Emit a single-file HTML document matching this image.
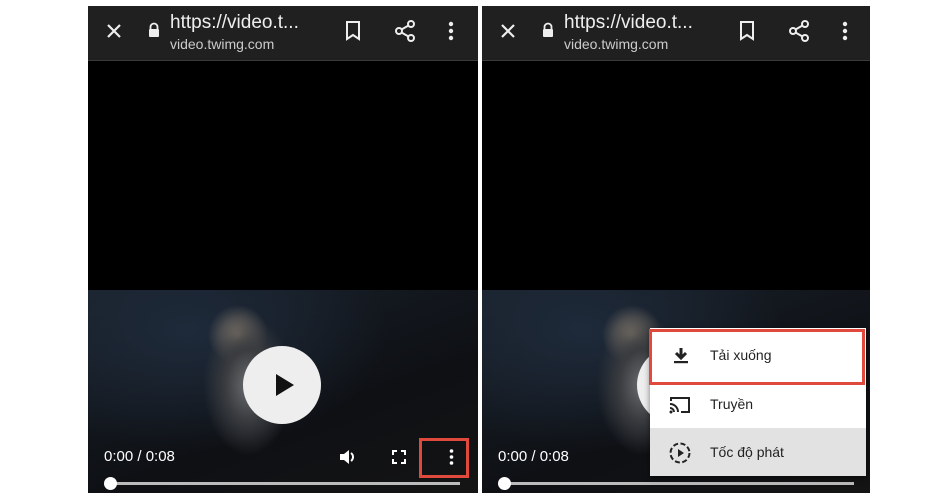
<!DOCTYPE html>
<html><head><meta charset="utf-8"><style>
body{margin:0;width:946px;height:497px;background:#fff;position:relative;overflow:hidden;font-family:"Liberation Sans",sans-serif}
.p{position:absolute;top:6px;width:390px;height:487px;background:#000;overflow:hidden}
.bar{position:absolute;left:0;top:0;width:100%;height:54px;background:#202020;border-bottom:1px solid #3a3a3a}
.url{position:absolute;left:82px;top:6px;color:#eee;font-size:19px}
.sub{position:absolute;left:82px;top:30px;color:#ccc;font-size:14px}
.img{position:absolute;left:0;top:284px;width:100%;height:203px;
background:radial-gradient(ellipse 45px 70px at 160px 95px,#6a6d70 0%,#3a3c40 50%,transparent 100%),
radial-gradient(ellipse 30px 30px at 150px 45px,#8a7e70,transparent),
radial-gradient(ellipse 200px 120px at 100px 40px,#1e2a3a,transparent),
linear-gradient(160deg,#1a222c,#0e1014 60%,#141414)}
.t{position:absolute;left:16px;top:442px;color:#fff;font-size:15px}
.track{position:absolute;left:22px;top:476px;width:350px;height:3px;background:#bbb}
.knob{position:absolute;left:16px;top:471px;width:13px;height:13px;border-radius:50%;background:#fff}
svg{position:absolute}
</style></head><body>
<div class="p" style="left:88px">
<div class="bar">
<svg style="left:16px;top:15px" width="20" height="20" viewBox="0 0 20 20"><path d="M4 4L16 16M16 4L4 16" stroke="#eee" stroke-width="2.2"/></svg>
<svg style="left:59px;top:16px" width="14" height="16" viewBox="0 0 14 16"><path d="M3.5 7V5a3.5 3.5 0 0 1 7 0v2" stroke="#eee" stroke-width="1.8" fill="none"/><rect x="2" y="7" width="10" height="8" rx="1" fill="#eee"/></svg>
<div class="url">https://video.t...</div><div class="sub">video.twimg.com</div>
<svg style="left:256px;top:14px" width="18" height="22" viewBox="0 0 18 22"><path d="M3 2h12v17l-6-4-6 4z" stroke="#eee" stroke-width="2" fill="none"/></svg>
<svg style="left:306px;top:13px" width="22" height="24" viewBox="0 0 22 24"><circle cx="17" cy="5" r="3" stroke="#eee" stroke-width="2" fill="none"/><circle cx="5" cy="12" r="3" stroke="#eee" stroke-width="2" fill="none"/><circle cx="17" cy="19" r="3" stroke="#eee" stroke-width="2" fill="none"/><path d="M7.5 10.5l7-4M7.5 13.5l7 4" stroke="#eee" stroke-width="2"/></svg>
<svg style="left:360px;top:15px" width="6" height="20"><circle cx="3" cy="3" r="2.2" fill="#eee"/><circle cx="3" cy="10" r="2.2" fill="#eee"/><circle cx="3" cy="17" r="2.2" fill="#eee"/></svg>
</div>
<div class="img"></div>
<svg style="left:155px;top:340px" width="78" height="78"><circle cx="39" cy="39" r="39" fill="#eee"/><path d="M33 28v22l18-11z" fill="#111"/></svg>
<div class="t">0:00 / 0:08</div>
<svg style="left:251px;top:443px" width="18" height="16" viewBox="0 0 18 16"><path d="M1 5h4l5-4v14l-5-4H1z" fill="#fff"/><path d="M12 4a5 5 0 0 1 0 8" stroke="#fff" stroke-width="2" fill="none"/></svg>
<svg style="left:304px;top:444px" width="14" height="14" viewBox="0 0 14 14"><path d="M1 5V1h4M9 1h4v4M13 9v4H9M5 13H1V9" stroke="#fff" stroke-width="2" fill="none"/></svg>
<svg style="left:361px;top:443px" width="5" height="16"><circle cx="2.5" cy="2" r="1.8" fill="#fff"/><circle cx="2.5" cy="8" r="1.8" fill="#fff"/><circle cx="2.5" cy="14" r="1.8" fill="#fff"/></svg>
<div style="position:absolute;left:331px;top:432px;width:50px;height:40px;border:3px solid #e04a3c;box-sizing:border-box"></div>
<div class="track"></div><div class="knob"></div>
</div>

<div class="p" style="left:482px;width:388px">
<div class="bar">
<svg style="left:16px;top:15px" width="20" height="20" viewBox="0 0 20 20"><path d="M4 4L16 16M16 4L4 16" stroke="#eee" stroke-width="2.2"/></svg>
<svg style="left:59px;top:16px" width="14" height="16" viewBox="0 0 14 16"><path d="M3.5 7V5a3.5 3.5 0 0 1 7 0v2" stroke="#eee" stroke-width="1.8" fill="none"/><rect x="2" y="7" width="10" height="8" rx="1" fill="#eee"/></svg>
<div class="url">https://video.t...</div><div class="sub">video.twimg.com</div>
<svg style="left:256px;top:14px" width="18" height="22" viewBox="0 0 18 22"><path d="M3 2h12v17l-6-4-6 4z" stroke="#eee" stroke-width="2" fill="none"/></svg>
<svg style="left:306px;top:13px" width="22" height="24" viewBox="0 0 22 24"><circle cx="17" cy="5" r="3" stroke="#eee" stroke-width="2" fill="none"/><circle cx="5" cy="12" r="3" stroke="#eee" stroke-width="2" fill="none"/><circle cx="17" cy="19" r="3" stroke="#eee" stroke-width="2" fill="none"/><path d="M7.5 10.5l7-4M7.5 13.5l7 4" stroke="#eee" stroke-width="2"/></svg>
<svg style="left:360px;top:15px" width="6" height="20"><circle cx="3" cy="3" r="2.2" fill="#eee"/><circle cx="3" cy="10" r="2.2" fill="#eee"/><circle cx="3" cy="17" r="2.2" fill="#eee"/></svg>
</div>
<div class="img"></div>
<svg style="left:155px;top:340px" width="78" height="78"><circle cx="39" cy="39" r="39" fill="#eee"/></svg>
<div class="t">0:00 / 0:08</div>
<div class="track" style="width:350px"></div><div class="knob"></div>
<div style="position:absolute;left:168px;top:322px;width:216px;height:148px;box-shadow:0 2px 6px rgba(0,0,0,.5);font-size:14px;color:#222">
 <div style="height:56px;background:#fff;position:relative">
  <svg style="left:22px;top:19px" width="18" height="18" viewBox="0 0 18 18"><path d="M9 1v9M4 6l5 5 5-5" stroke="#222" stroke-width="3" fill="none"/><rect x="2" y="14" width="14" height="2.2" fill="#222"/></svg>
  <div style="position:absolute;left:60px;top:19px">Tải xuống</div>
 </div>
 <div style="height:44px;background:#fff;position:relative">
  <svg style="left:18px;top:11px" width="24" height="20" viewBox="0 0 24 20"><path d="M3 6V3h18v14h-8" stroke="#222" stroke-width="2" fill="none"/><path d="M2 9a8 8 0 0 1 8 8M2 13a4 4 0 0 1 4 4" stroke="#222" stroke-width="2" fill="none"/><circle cx="3" cy="17" r="1.5" fill="#222"/></svg>
  <div style="position:absolute;left:60px;top:12px">Truyền</div>
 </div>
 <div style="height:48px;background:#e2e2e2;position:relative">
  <svg style="left:18px;top:13px" width="24" height="24" viewBox="0 0 24 24"><circle cx="12" cy="12" r="9.5" stroke="#222" stroke-width="2" fill="none" stroke-dasharray="5 2.5"/><path d="M10 8v8l6-4z" fill="#222"/></svg>
  <div style="position:absolute;left:60px;top:16px">Tốc độ phát</div>
 </div>
</div>
<div style="position:absolute;left:167px;top:323px;width:216px;height:56px;border:3px solid #e04a3c;box-sizing:border-box"></div>
</div>
</body></html>
